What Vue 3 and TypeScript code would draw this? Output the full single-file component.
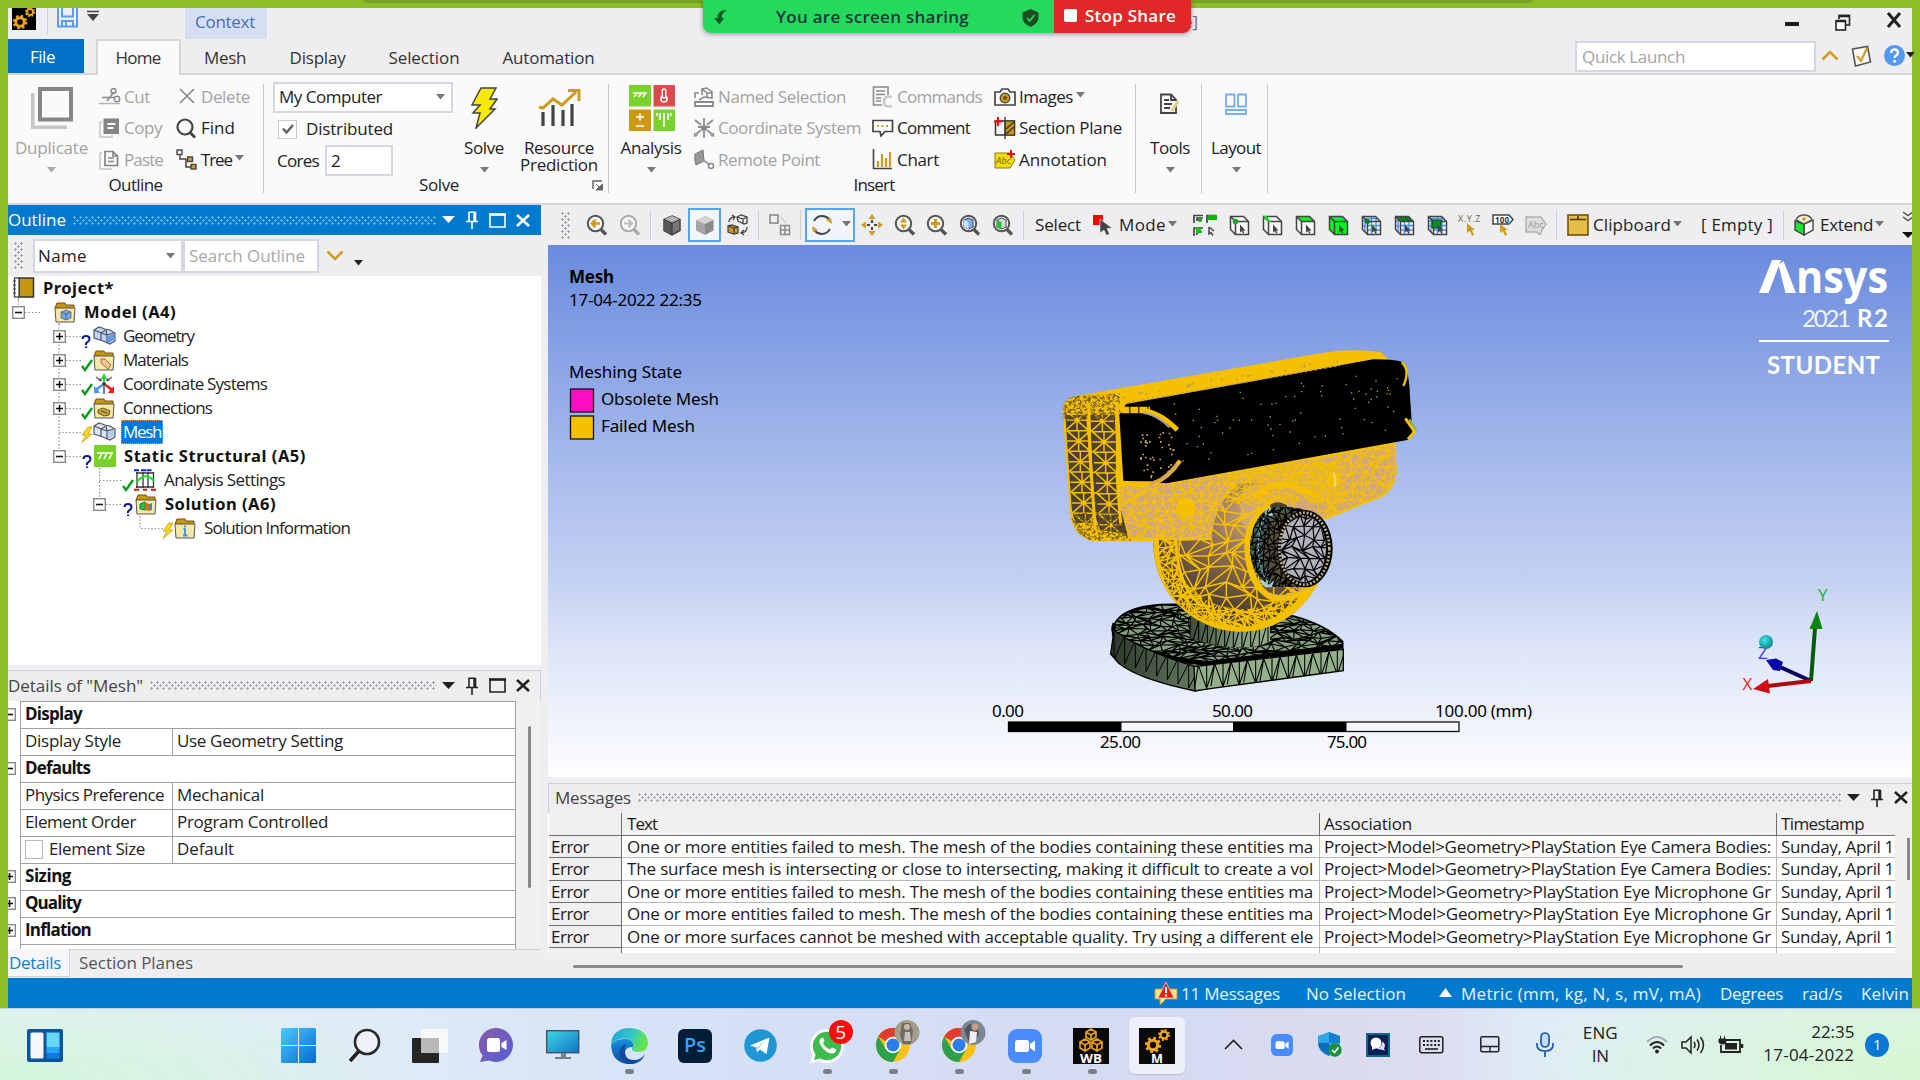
<script setup lang="ts">
import { h } from 'vue'

/* Spreads a label's letters so it takes exactly the given number of pixels. */
const vFit = {
  mounted(el: HTMLElement, binding: { value?: number }) {
    if (!binding.value) return
    const range = document.createRange()
    range.selectNodeContents(el)
    const natural = range.getBoundingClientRect().width
    const count = (el.textContent || '').trim().length
    el.style.letterSpacing = ((binding.value - natural) / count).toFixed(3) + 'px'
  },
}

const cubeBox = '<path d="M1.500 1.500h13l5 5v13h-13l-5-5z" fill="#f6f6f6"/>'
const cubeLines = '<path d="M1.500 1.500h13l5 5v13h-13l-5-5zM1.500 1.500l5 5h13M6.500 6.500v13" fill="none" stroke="#444" stroke-width="1.500"/>'
const cursor = '<path d="M11 9.500v8l2-1.500 1 2.500 1.300-.6-1-2.400h2.200z" fill="#444"/>'
const cubeGrid = '<path d="M1.500 6h4M1.500 11h4M6.500 10.500h13M6.500 15h13M10.500 2v17M15 2v17M4 3v14M3 3.500h14" fill="none" stroke="#4a90ee" stroke-width="1.400"/>'
const lens = (c: string) => `<circle cx="9.500" cy="9.500" r="7.700" fill="#f7f7f7" stroke="${c}" stroke-width="2"/><path d="M15 15.500l5 5" stroke="${c}" stroke-width="3.400"/>`
const folder = '<path d="M1 7l2-5h8l1 2h8v5z" fill="#c8960c" stroke="#6b5312"/><path d="M1 7h20l-1 14H2z" fill="#f4e9ab" stroke="#555"/>'
const gear = (x: number, y: number, s: number) => `<g transform="translate(${x} ${y}) scale(${s})"><circle r="5" fill="none" stroke="#f0a41c" stroke-width="3.400"/><circle r="7.300" fill="none" stroke="#f0a41c" stroke-width="2.600" stroke-dasharray="2.900 2.830"/></g>`
const chrome = '<circle cx="17" cy="17" r="17" fill="#fbc116"/><path d="M17 17L2.300 8.500A17 17 0 0 1 31.700 8.500H17z" fill="#e33b2e"/><path d="M17 17l7.300 4.200L17 34A17 17 0 0 1 2.300 8.500L9.700 21z" fill="#2ea04b"/><path d="M2.300 8.500A17 17 0 0 1 31.700 8.500H17a8.500 8.500 0 0 0-7.400 4.300z" fill="#e33b2e"/><circle cx="17" cy="17" r="8.300" fill="#fff"/><circle cx="17" cy="17" r="6.500" fill="#2b7de9"/>'
const camera = (s: number) => `<g transform="scale(${s})"><rect width="34" height="34" rx="9" fill="#4a8cff"/><rect x="7" y="11" width="14" height="12" rx="2.500" fill="#fff"/><path d="M22 15l5-3.500v11L22 19z" fill="#fff"/></g>`
const miniCube = (f: string) => `<path d="M5 7l5-2 5 2v6l-5 2-5-2z" fill="${f}" stroke="#667" stroke-width=".8"/><path d="M5 7l5 2 5-2M10 9v6" fill="none" stroke="#556" stroke-width=".8"/>`
const blocks = (a: string, b: string) => `<path d="M1 5l5-3 6 2 5 1 5 3v8l-5 3-7-3-9-3z" fill="${a}" stroke="#556" stroke-width="1.200"/><path d="M15 11l6-2v6l-6 3z" fill="${b}"/><path d="M1 5l7 3v8M8 8l5-3M8 8l6 2v8M14 10l7-2M14 10l-1-5" fill="none" stroke="#556" stroke-width="1.200"/>`

const icons: Record<string, [number, number, string]> = {
  app: [24, 22, `<rect width="24" height="22" fill="#000"/>${gear(8, 14, 0.85)}${gear(18, 4, 0.6)}`],
  save: [21, 20, '<path d="M1 0v18.500h19V0M5 0v8.500h11V0M5 18v-5h11v5M9 14v4" fill="none" stroke="#5b9bf0" stroke-width="2"/>'],
  qat: [12, 12, '<path d="M0 1.500h12" stroke="#444" stroke-width="1.500"/><path d="M0 4h12L6 11z" fill="#444"/>'],
  down: [9, 6, '<path d="M0 0h9L4.500 5.500z" fill="#777"/>'],
  downLight: [9, 6, '<path d="M0 0h9L4.500 5.500z" fill="#a9a9a9"/>'],
  downDark: [9, 6, '<path d="M0 0h9L4.500 5.500z" fill="#222"/>'],
  up: [13, 9, '<path d="M0 9h13L6.500 0z" fill="#fff"/>'],
  min: [14, 4, '<rect width="14" height="4" fill="#1a1a1a"/>'],
  restore: [16, 17, '<path d="M4 5V1.500h10.500V11H11" fill="none" stroke="#222" stroke-width="1.600"/><path d="M4 2h11" stroke="#222" stroke-width="2.500"/><rect x="1" y="7" width="9.500" height="9" fill="#fff" stroke="#222" stroke-width="1.600"/><path d="M1 7h9.500" stroke="#222" stroke-width="2.500"/>'],
  close: [16, 16, '<path d="M2 1l12 14M14 1L2 15" stroke="#222" stroke-width="3"/>'],
  chevUp: [18, 12, '<path d="M1.500 10.500L9 3l7.500 7.500" fill="none" stroke="#cfa020" stroke-width="2.600"/>'],
  chevDown: [18, 12, '<path d="M1.500 1.500L9 9l7.500-7.500" fill="none" stroke="#cfa020" stroke-width="2.600"/>'],
  checkSheet: [21, 22, '<path d="M1.500 4L16.500 1.500l3 15.500-15 4z" fill="#fafafa" stroke="#555" stroke-width="1.600"/><path d="M6 11l4 5 6-13" fill="none" stroke="#cfa020" stroke-width="2.200"/>'],
  help: [21, 21, '<circle cx="10.500" cy="10.500" r="10.500" fill="#5298f0"/><path d="M7.200 8q0-3.500 3.400-3.500T14 7.500q0 1.600-1.700 2.700T10.600 13" fill="none" stroke="#fff" stroke-width="2.300"/><circle cx="10.600" cy="16.300" r="1.500" fill="#fff"/>'],
  duplicate: [42, 42, '<path d="M1.500 6v34.500H36" fill="none" stroke="#c6c6c6" stroke-width="4"/><rect x="9" y="2" width="31" height="30.500" fill="#fafafa" stroke="#868686" stroke-width="4"/>'],
  cut: [22, 18, '<path d="M0 15.500h21" stroke="#b5b5b5" stroke-width="1.500"/><path d="M3 9.500h12M8 13l7-9" stroke="#8a8a8a" stroke-width="1.700" fill="none"/><circle cx="14.500" cy="3" r="2.500" fill="none" stroke="#8a8a8a" stroke-width="1.500"/><circle cx="18" cy="11" r="2.700" fill="none" stroke="#8a8a8a" stroke-width="1.500"/>'],
  copy: [22, 20, '<path d="M3 4H1v15h12v-2" fill="none" stroke="#c6c6c6" stroke-width="1.500"/><rect x="4.500" y=".5" width="15.500" height="15.500" fill="#848484"/><path d="M8.500 6h8M8.500 10h6" stroke="#fff" stroke-width="1.800"/>'],
  paste: [22, 20, '<path d="M3 3H1v16h12" fill="none" stroke="#c6c6c6" stroke-width="1.500"/><path d="M6 1.500h8l4.500 4.500v9.500H6zM14 1.500V6h4.500M9 8h6M9 11.500h6" fill="none" stroke="#848484" stroke-width="1.700"/>'],
  delete: [20, 17, '<path d="M3 1l14 14M17 1L3 15" stroke="#8c8c8c" stroke-width="1.700"/>'],
  find: [21, 21, '<circle cx="9" cy="9" r="7.500" fill="none" stroke="#444" stroke-width="2.200"/><path d="M14 14.500l5 5" stroke="#444" stroke-width="2.800"/>'],
  tree: [22, 21, '<path d="M4 5v5h6M10 10v8h6" fill="none" stroke="#444" stroke-width="1.500"/><rect x="1" y="1" width="5" height="4.500" fill="#fff" stroke="#444" stroke-width="1.400"/><rect x="11.500" y="8" width="5" height="4.500" fill="#cfa020" stroke="#444" stroke-width="1.400"/><rect x="15" y="15.500" width="5" height="4.500" fill="#cfa020" stroke="#444" stroke-width="1.400"/>'],
  tick: [12, 10, '<path d="M1 4.500l3.500 4L11 1" fill="none" stroke="#666" stroke-width="2.600"/>'],
  solve: [27, 42, '<path d="M10 1h15l-6 11h7l-7 10h5L5 41l4-15H2l7-8H1z" fill="#f7e908" stroke="#444" stroke-width="1.500"/>'],
  resource: [43, 38, '<path d="M5 37V23M15 37V16M25 37V21M34 37V15" stroke="#444" stroke-width="3.200"/><path d="M1 18l4 1 10-9 9 6L38 3" fill="none" stroke="#cf9b1c" stroke-width="3"/><path d="M30 1.500h11V12" fill="none" stroke="#cf9b1c" stroke-width="3"/>'],
  launcher: [12, 11, '<path d="M1 9V1h9" fill="none" stroke="#666" stroke-width="1.500"/><path d="M4 4l5 5M10.500 4v6H4z" fill="#666" stroke="#666"/>'],
  analysis: [46, 46, '<rect width="22" height="21.500" fill="#79d22b"/><rect x="24.500" width="21.500" height="21.500" fill="#df4a4e"/><rect y="24.500" width="22" height="21.500" fill="#cb9811"/><rect x="24.500" y="24.500" width="21.500" height="21.500" fill="#79d22b"/><path d="M4 8h14M8 8l-3 4M12.500 8l-3 4M17 8l-3 4" stroke="#fff" stroke-width="1.600"/><circle cx="35" cy="14" r="3" fill="none" stroke="#fff" stroke-width="1.600"/><rect x="33.300" y="4" width="3.500" height="9" rx="1.700" fill="#df4a4e" stroke="#fff" stroke-width="1.400"/><path d="M7 32h8M11 28.500v7M7 41h8M35 28v14M31 28v7M39 28v7M28 28v3M42 28v3" stroke="#fff" stroke-width="1.700"/>'],
  named: [22, 22, '<path d="M2 16h18v4H2z" fill="#fff" stroke="#8a8a8a" stroke-width="1.800"/><path d="M6 14l5-3 8 1v-6l-5-4-5 1v6M9 3l5 4v6M14 7h5M2 12V7h4" fill="none" stroke="#8a8a8a" stroke-width="1.600"/>'],
  coord: [22, 22, '<path d="M11 1v7M2 3l6 5M20 3l-6 5M1 19l7-6M21 19l-7-6M11 14v7M5 10h12" stroke="#909090" stroke-width="1.800"/><path d="M1 20v-5l4 4zM21 20v-5l-4 4z" fill="#999"/><circle cx="11" cy="11" r="3" fill="#888"/>'],
  remote: [22, 21, '<path d="M2 5l8-4 1 11-8 4q-2-6-1-11z" fill="#999" stroke="#777"/><path d="M9 10l8 6" stroke="#999" stroke-width="1.600"/><circle cx="18" cy="17" r="2.500" fill="#fff" stroke="#888" stroke-width="1.500"/>'],
  commands: [22, 22, '<path d="M16 9V1H1.500v18H10M4 5h9M4 8.500h9M4 12h5M4 15h5" fill="none" stroke="#8a8a8a" stroke-width="1.600"/><path d="M20 11q-8-2-8 4.500t8 4.500" fill="none" stroke="#c9c9c9" stroke-width="2.600"/>'],
  comment: [22, 18, '<path d="M1 1.500h19.500v11H13L9 17l-1-4.500H1z" fill="#fff" stroke="#444" stroke-width="1.700"/><path d="M5 7h2M9.500 7h2M14 7h2" stroke="#cfa020" stroke-width="2"/>'],
  chart: [22, 21, '<path d="M1.500 0v19.500H20" fill="none" stroke="#444" stroke-width="1.600"/><path d="M6 18v-6M10 18V5M14 18V9M18 18V3" stroke="#cf9b1c" stroke-width="2.200"/>'],
  images: [22, 18, '<path d="M1 4h5l2-3h6l2 3h5v13H1z" fill="#f8f8f8" stroke="#444" stroke-width="1.700"/><circle cx="11" cy="10" r="4.800" fill="#cf9b1c" stroke="#444" stroke-width="1.300"/><circle cx="11" cy="10" r="2" fill="#6b4d06"/>'],
  section: [22, 22, '<rect x="1.500" y="4" width="19" height="14" fill="#f4f4f4" stroke="#333" stroke-width="1.500"/><rect x="11" y="4" width="9.500" height="14" fill="#c8960c" stroke="#333"/><path d="M12 12l8-7M12 17l8-7M11 0v22" stroke="#333" stroke-width="1.300"/><path d="M4 0v9M0 4.500h8" stroke="#f00" stroke-width="2"/>'],
  annotation: [22, 20, '<path d="M1 3h15l5 7-5 8H1z" fill="#f5dd0c" stroke="#8a7b10"/><text x="2" y="14" font-size="9.500" font-family="Open Sans" fill="#776a10">Abc</text><path d="M17 0v8M13 4h8" stroke="#f00" stroke-width="2"/>'],
  tools: [22, 22, '<path d="M17 11v9H2V1.500h10l5 5V8M12 1.500V7h5M5 7h5M5 11h8M5 15h6" fill="none" stroke="#444" stroke-width="1.800"/><path d="M19 8l-6 10" stroke="#e6c88a" stroke-width="3"/>'],
  layout: [22, 22, '<path d="M1 1.500h8.500v12H1zM13 1.500h8v12h-8zM1 17h20v4H1z" fill="none" stroke="#7aacf0" stroke-width="1.800"/>'],
  zback: [22, 22, lens('#555') + '<path d="M14 9.500H7M9.500 6L6 9.500 9.500 13" stroke="#cf9b1c" stroke-width="2.600" fill="none"/>'],
  zfwd: [22, 22, lens('#aaa') + '<path d="M5 9.500h7M9.500 6l3.500 3.500L9.500 13" stroke="#bbb" stroke-width="2" fill="none"/>'],
  cubeDark: [20, 21, '<path d="M10 1l8 3.500v11L10 20l-8-4.500v-11z" fill="#777" stroke="#444" stroke-width="1.500"/><path d="M10 1l8 3.500-8 3.500-8-3.500z" fill="#b5b5b5"/><path d="M10 8v12l-8-4.500v-11z" fill="#585858"/><path d="M2 4.500L10 8l8-3.500M10 8v12" fill="none" stroke="#333"/>'],
  cubeSoft: [20, 21, '<path d="M10 1l8.500 4v10.500L10 20z" fill="#8a8a8a"/><path d="M10 1l8.500 4L10 9 1 5z" fill="#d3d3d3"/><path d="M10 9v11L1 15.500V5z" fill="#a5a5a5"/>'],
  cubes: [22, 22, '<path d="M10 3l4-2 6 2v6l-3 1-6-3zM10 3l6 2 4-2M16 5v5" fill="#eee" stroke="#444" stroke-width="1.300"/><path d="M1 12l4-1 6 2v6l-4 1-6-2z" fill="#cf9b1c" stroke="#444" stroke-width="1.300"/><path d="M1 12l6 2 4-1M7 14v6" fill="none" stroke="#444" stroke-width="1.300"/><path d="M2 8q0-4 5-5M5 1l3 2-2 3M20 13q0 5-5 6M17 16l-3 3 3 2" fill="none" stroke="#444" stroke-width="1.300"/>'],
  boxes: [22, 22, '<rect x="1" y="1" width="8" height="8" fill="none" stroke="#8a8a8a" stroke-width="1.600"/><path d="M11.500 11.500h9v9h-9zM16 11.500v9M11.500 16h9" fill="none" stroke="#8a8a8a" stroke-width="1.500"/><path d="M12 3l5 6" stroke="#ccc" stroke-width="1.400"/>'],
  orbit: [22, 22, '<path d="M3 7q3-5 8-5 4 0 7 3M19 15q-3 5-8 5-4 0-7-3" fill="none" stroke="#444" stroke-width="1.800"/><path d="M15 6l5-2 1 6zM7 16l-5 2-1-6z" fill="#cf9b1c"/>'],
  pan: [22, 22, '<path d="M11 0l3.500 5h-7zM11 22l3.500-5h-7zM0 11l5-3.500v7zM22 11l-5-3.500v7z" fill="#cf9b1c"/><path d="M11 6v3M11 13v3M6 11h3M13 11h3" stroke="#444" stroke-width="2"/>'],
  zud: [22, 22, lens('#555') + '<path d="M9.500 3.500l3.500 5H6zM9.500 15.500L6 10.500h7z" fill="#cf9b1c"/>'],
  zplus: [22, 22, lens('#555') + '<path d="M9.500 5v9M5 9.500h9" stroke="#cf9b1c" stroke-width="3"/>'],
  zblue: [22, 22, lens('#555') + '<path d="M9.500 4l4.500 2v7l-4.500 2L5 13V6z" fill="#7badf0" stroke="#445"/><path d="M9.500 8v7L5 13V6z" fill="#cfe0f8"/>'],
  zgreen: [22, 22, lens('#555') + '<path d="M9.500 4l4.500 2v7l-4.500 2L5 13V6z" fill="#ddd" stroke="#444"/><path d="M9.500 8v7L5 13V6z" fill="#19c52c"/>'],
  redcur: [22, 22, '<rect y="1" width="10" height="10" fill="#f00"/><path d="M7 5v14l4-3 2.500 5.500 3-1.500-2.500-5.500 5-.5z" fill="#444" stroke="#eee" stroke-width=".6"/>'],
  filters: [24, 23, '<path d="M1 9V1.500h9M4 7V4h6M14 9V1.500h9M1 22v-8h9M4 21v-3h5" fill="none" stroke="#444" stroke-width="1.700"/><rect x="15" y="1" width="9" height="5" fill="#0b0"/><circle cx="7" cy="6" r="2" fill="#0a0"/><rect x="3" y="14" width="5" height="5" fill="#0c0"/><path d="M16 13v7l2-1.500 2 3M16 13l5 4" stroke="#444" stroke-width="1.500" fill="none"/>'],
  c1: [21, 21, cubeBox + cubeLines + '<circle cx="6.500" cy="6.500" r="2.800" fill="#1aa52a"/>' + cursor],
  c2: [21, 21, cubeBox + cubeLines + '<path d="M1 1h4l4 6H6z" fill="#1ad52a"/>' + cursor],
  c3: [21, 21, cubeBox + '<path d="M1.500 1.500h13l5 5h-13z" fill="#0bf51c"/>' + cubeLines + cursor],
  c4: [21, 21, '<path d="M1.500 1.500h13l5 5v13h-13l-5-5z" fill="#0bf51c"/>' + cubeLines + cursor],
  c5: [21, 21, cubeBox + cubeGrid + cubeLines + '<circle cx="6.500" cy="6.500" r="2.500" fill="#0a7a1a"/>' + cursor],
  c6: [21, 21, cubeBox + cubeGrid + '<path d="M1.500 1.500h13l5 5h-13z" fill="#118a20"/><path d="M6 2l4 4M11 2l4 4" stroke="#042"/>' + cubeLines + cursor],
  c7: [21, 21, cubeBox + cubeGrid + cubeLines + '<path d="M5 5h9v8H5z" fill="#118a20" stroke="#042"/>' + cursor],
  xyz: [23, 22, '<text x="0" y="8" font-size="9" letter-spacing=".6" font-family="Open Sans" fill="#666">X.Y.Z</text><path d="M9 9v10l3-2 2 5 2-1-2-5h3z" fill="#cf9b1c"/>'],
  hundred: [22, 22, '<path d="M1 1h16l4 4.500-4 4.500H1z" fill="#fff" stroke="#444" stroke-width="1.500"/><text x="3" y="8.700" font-size="8" font-weight="700" textLength="14" font-family="Open Sans" fill="#333">100</text><path d="M8 10v9l3-2 2 5 2-1-2-5h3z" fill="#cf9b1c"/>'],
  abc: [22, 20, '<path d="M1 2h15l5 7-5 8-1 3-3-3H1z" fill="#ddd" stroke="#b0b0b0" stroke-width="1.400"/><text x="3" y="13" font-size="9" font-family="Open Sans" fill="#999">Abc</text>'],
  clip: [22, 22, '<rect x="1" y="1" width="20" height="20" fill="#e6bd45" stroke="#6b5312" stroke-width="1.600"/><path d="M3 5.500h16M11 2v3" stroke="#4b3a0c" stroke-width="1.600"/>'],
  extend: [22, 22, '<path d="M11 10l9-4v10l-9 5z" fill="#fff" stroke="#444" stroke-width="1.400"/><path d="M11 10L2 7v9l9 5z" fill="#1be52c" stroke="#444" stroke-width="1.400"/><path d="M3 6q2-5 8-5t8 5l-8 4z" fill="#f3ecd8" stroke="#555" stroke-width="1.400"/><path d="M11 3v4M9 5h4" stroke="#cf9b1c" stroke-width="1.500"/>'],
  overflow: [10, 28, '<path d="M1 1l5 3.500L11 1M1 6l5 3.500L11 6" fill="none" stroke="#555" stroke-width="1.500"/><path d="M0 21h12l-6 6z" fill="#111"/>'],
  pDown: [13, 8, '<path d="M0 0h13L6.500 7z" fill="currentColor"/>'],
  pPin: [12, 18, '<path d="M3 1v9M9.500 1v9M2.500 1.200h7M0 10.500h12M6 11v7" fill="none" stroke="currentColor" stroke-width="1.600"/><path d="M8.500 1v9" stroke="currentColor" stroke-width="2.400"/>'],
  pMax: [17, 15, '<path d="M1 1.500h15V14H1z" fill="none" stroke="currentColor" stroke-width="1.600"/><path d="M0 1.500h17" stroke="currentColor" stroke-width="2.500"/>'],
  pX: [14, 13, '<path d="M1 1l12 11M13 1L1 12" stroke="currentColor" stroke-width="2.500"/>'],
  minus: [13, 13, '<rect x=".7" y=".7" width="11.600" height="11.600" fill="#fff" stroke="#8a8a8a" stroke-width="1.400"/><path d="M3 6.500h7" stroke="#111" stroke-width="1.600"/>'],
  plus: [13, 13, '<rect x=".7" y=".7" width="11.600" height="11.600" fill="#fff" stroke="#8a8a8a" stroke-width="1.400"/><path d="M3 6.500h7M6.500 3v7" stroke="#111" stroke-width="1.600"/>'],
  sq: [10, 14, '<path d="M1.500 4q0-3 3.500-3t3.500 3q0 2-2 3.200T5 10" fill="none" stroke="#0b1d8c" stroke-width="2"/><rect x="4" y="11.500" width="2.200" height="2.200" fill="#0b1d8c"/>'],
  sok: [12, 12, '<path d="M1 7l3 4L11 1" fill="none" stroke="#0d9a16" stroke-width="2.400"/>'],
  sbolt: [12, 16, '<path d="M7 0L1 8h4l-4 7.500L11 7H7l4-7z" fill="#fbd91a" stroke="#c59a10" stroke-width=".8"/>'],
  project: [21, 21, '<rect x="6" y="1" width="14.500" height="19" fill="#c8960c" stroke="#333" stroke-width="1.500"/><rect x="1.500" y="1" width="4.500" height="19" fill="#fff" stroke="#444" stroke-width="1.300"/><path d="M0 4h3M0 8h3M0 12h3M0 16h3" stroke="#444"/>'],
  model: [22, 22, folder + '<g transform="translate(2 4)">' + miniCube('#6ea8ee') + '</g>'],
  geometry: [22, 20, blocks('#bcd4f4', '#5f9be8')],
  mesh: [22, 20, blocks('#dbe6f5', '#b4cbea')],
  materials: [22, 22, folder + '<path d="M8 10h4l6 6-3 4-7-6z" fill="#f6c79a" stroke="#a06a3a"/>'],
  csys: [22, 22, '<path d="M3 4l5 4M19 4l-5 4" stroke="#666" stroke-width="1.600"/><path d="M9 8l-4 0 3-3zM13 8l4 0-3-3z" fill="#555"/><path d="M11 21v-8" stroke="#777" stroke-width="2"/><path d="M11 0l3 6h-2v5h-2V6H8z" fill="#1ad52a"/><path d="M1 20v-7l2 2 6-4 1 2-5 4 2 3z" fill="#4a96ee"/><path d="M21 20v-7l-2 2-6-4-1 2 5 4-2 3z" fill="#f01818"/><circle cx="11" cy="11" r="2" fill="#444"/>'],
  conn: [22, 22, folder + '<path d="M5 13l5-2 7 3-1 4-5 1-6-3z" fill="#c8a23a" stroke="#6b5312"/><path d="M8 14l6 2" stroke="#444"/>'],
  structural: [22, 22, '<rect width="22" height="22" fill="#79d22b"/><path d="M3 8h16M8 8l-3 6M13 8l-3 6M18 8l-3 6" stroke="#fff" stroke-width="1.600"/>'],
  settings: [22, 22, '<path d="M3 3v16M9 3v16M14 3v16M19.500 3v16M2 4h18M2 18h18" stroke="#333" stroke-width="1.300"/><path d="M3 13Q11 2 20 12" fill="none" stroke="#12e02a" stroke-width="2"/><path d="M0 1.200h5M7 1.200h5M12.500 1.200h5" stroke="#0a22e8" stroke-width="2"/><path d="M0 20.800h5M9 20.800h4M17 20.800h5" stroke="#e81010" stroke-width="2"/>'],
  solution: [22, 22, folder + '<path d="M5 11l5-2v8l-5-1z" fill="#1ec83a" stroke="#274"/><path d="M10 9l4 2v7l-4-1z" fill="#e8641e"/><path d="M14 11l3-1v7l-3 1z" fill="#2b8ce8"/>'],
  info: [22, 22, folder + '<path d="M11 12v6M9 18.500h4.500M9.500 12h2M11 8.500v2" stroke="#3f8ee8" stroke-width="1.800"/>'],
  warn: [24, 24, '<path d="M1 7h22v10H12l-6 6v-6H1z" fill="#ffe28a" stroke="#c29a30"/><path d="M12 0l8 16H4z" fill="#e02010" stroke="#f7c9c0" stroke-width=".8"/><path d="M12 5v6" stroke="#fff" stroke-width="2"/><circle cx="12" cy="13.500" r="1.200" fill="#fff"/>'],
  phone: [14, 16, '<path d="M13 1Q3 1 3.500 9H0l5.500 6.500L10 9H8Q7 4 13 1z" fill="#0c5a22"/>'],
  shield: [17, 18, '<path d="M8.500 0l8 3.500v5q0 6-8 9.500-8-3.500-8-9.500v-5z" fill="#1b4f22"/><path d="M5 9l2.700 3L12.500 6" fill="none" stroke="#25da5e" stroke-width="1.700"/>'],
  widgets: [36, 33, '<rect width="36" height="33" rx="2" fill="#0a559f"/><rect x="3.500" y="3.500" width="13" height="26" rx="1.500" fill="#f4f8fc"/><rect x="19.500" y="3.500" width="13" height="15" fill="#69d6fb"/><rect x="19.500" y="18" width="13" height="6" fill="#27a3f3"/><rect x="19.500" y="24" width="13" height="5.500" fill="#0a7ce0"/>'],
  start: [35, 35, '<defs><linearGradient id="wg" x1="0" y1="0" x2="1" y2="1"><stop offset="0" stop-color="#4ccaff"/><stop offset="1" stop-color="#0669d2"/></linearGradient></defs><path d="M0 1.500Q0 0 1.500 0H17v17H0zM18 0h15.500Q35 0 35 1.500V17H18zM0 18h17v17H1.500Q0 35 0 33.500zM18 18h17v15.500q0 1.500-1.500 1.500H18z" fill="url(#wg)"/>'],
  search: [34, 35, '<circle cx="20" cy="14" r="12" fill="#eef2f8" stroke="#2a2a2a" stroke-width="2.600"/><path d="M12 23L3 33" stroke="#222" stroke-width="3.600"/>'],
  taskview: [36, 34, '<rect y="9" width="27" height="25" rx="1" fill="#262626"/><rect x="9" width="27" height="24" rx="1" fill="#fafafa" fill-opacity=".95"/><path d="M9 9h18v15H9z" fill="#b9b9b9"/>'],
  chat: [35, 35, '<defs><linearGradient id="cg" x1="0" y1="0" x2="1" y2="1"><stop offset="0" stop-color="#8a5aa8"/><stop offset="1" stop-color="#5560d8"/></linearGradient></defs><path d="M17.500 0A17 17 0 1 1 10 32.500L1 34l2.500-6.500A17 17 0 0 1 17.500 0z" fill="url(#cg)"/><rect x="8" y="10" width="13" height="14" rx="2.500" fill="#fff"/><path d="M22.500 15l5-3v10l-5-3z" fill="#fff"/>'],
  monitor: [34, 30, '<defs><linearGradient id="mg" x1="0" y1="0" x2="1" y2="1"><stop offset="0" stop-color="#3fd8e4"/><stop offset="1" stop-color="#1372c4"/></linearGradient></defs><rect x=".7" y=".7" width="32" height="22" fill="url(#mg)" stroke="#3a5568" stroke-width="1.400"/><path d="M15 23h5v4h-5zM9 27h16v2H9z" fill="#777f88"/>'],
  edge: [37, 36, '<defs><linearGradient id="e1" x1="0" y1="0" x2="1" y2=".3"><stop offset="0" stop-color="#1fa0e0"/><stop offset=".6" stop-color="#35c9c0"/><stop offset="1" stop-color="#66e64c"/></linearGradient><linearGradient id="e2" x1="0" y1="0" x2="0" y2="1"><stop offset="0" stop-color="#1890dc"/><stop offset="1" stop-color="#0d4ba8"/></linearGradient></defs><path d="M0 17Q1 0 19 0q17 1 18 15 0 9-10 9-7 0-6-4 3-6-4-9Q6 9 0 17z" fill="url(#e1)"/><path d="M0 17q5-7 15-6 8 1 7 8-9 0-8 7 2 8 12 8-5 3-10 2Q1 34 0 17z" fill="url(#e2)"/><path d="M14 24q0 8 9 8 7 0 11-6-3 9-13 10Q8 35 8 24q1-6 7-8-2 4-1 8z" fill="#114b9e"/>'],
  ps: [34, 34, '<rect width="34" height="34" rx="6" fill="#001e36"/><text x="6" y="22.500" font-size="19" font-weight="600" textLength="22" lengthAdjust="spacingAndGlyphs" font-family="Open Sans" fill="#31a8ff">Ps</text>'],
  telegram: [33, 33, '<circle cx="16.500" cy="16.500" r="16.300" fill="#1e96d4"/><path d="M6 16.500L25.500 8.500 22.500 25l-6.500-4.500-3 3-1-5z" fill="#fff"/><path d="M12.500 18.500l9-7-7 8-.8 3.500z" fill="#b7d9ec"/>'],
  whatsapp: [36, 36, '<path d="M18 1A17 17 0 1 1 10 33L1 35.500 3.500 26.500A17 17 0 0 1 18 1z" fill="#fff"/><circle cx="18" cy="18" r="14.200" fill="#3dbb4c"/><path d="M5 32l2.500-8L13 30z" fill="#3dbb4c"/><path d="M12 10q-4 4 2 10.500T25.500 25q3-3 1-4l-3.500-1.500-2 2q-5-2-7-6.500l1.500-2-1.500-3.500z" fill="#fff"/>'],
  chromeA: [44, 43, `<g transform="translate(0 8)">${chrome}</g><circle cx="31" cy="12.500" r="12.500" fill="#a39d8b"/><path d="M26 3h8l3 8-2 13h-8l-3-9z" fill="#6f6a68"/><circle cx="31" cy="7" r="3" fill="#cdb9a4"/><path d="M29 12h5l1 9h-7z" fill="#c6c2b8"/>`],
  chromeB: [44, 43, `<g transform="translate(0 8)">${chrome}</g><circle cx="31" cy="12.500" r="12.500" fill="#7e8792"/><path d="M22 10l5-6 9 2 1 9-9 9z" fill="#4f5660"/><circle cx="33" cy="7" r="3.500" fill="#c89d80"/><path d="M28 11l7 1-1 10-7 2z" fill="#eef0f4"/>`],
  zoom: [34, 34, camera(1)],
  wb: [36, 36, '<rect width="36" height="36" fill="#0a0a0a"/><g fill="none" stroke="#e79d1e" stroke-width="1.700"><path d="M18 1l5 3v5l-5 3-5-3V4zM13 4l5 3 5-3M18 7v5M12 11l5 3v6l-5 3-5-3v-6zM7 14l5 3 5-3M12 17v6M24 11l5 3v6l-5 3-5-3v-6zM19 14l5 3 5-3M24 17v6"/></g><text x="7" y="35" font-size="13" font-weight="700" textLength="22" lengthAdjust="spacingAndGlyphs" font-family="Open Sans" fill="#fff">WB</text>'],
  mech: [36, 36, `<rect width="36" height="36" fill="#0a0a0a"/>${gear(14, 17, 0.95)}${gear(25, 7, 0.7)}<text x="12" y="35" font-size="13" font-weight="700" textLength="12" lengthAdjust="spacingAndGlyphs" font-family="Open Sans" fill="#fff">M</text>`],
  tUp: [19, 11, '<path d="M1 10l8.500-8.500L18 10" fill="none" stroke="#222" stroke-width="1.600"/>'],
  tZoom: [22, 22, camera(0.65)],
  tShield: [24, 25, '<path d="M11 0l11 4v7q0 9-11 13Q0 20 0 11V4z" fill="#2aa7e6"/><path d="M11 0l11 4v7H11z" fill="#1580cf"/><path d="M0 11h11v13Q1 19 0 11z" fill="#0f6cbd"/><circle cx="17" cy="18" r="6.700" fill="#1a8f3c"/><path d="M14 18l2.500 2.500 4-5" fill="none" stroke="#fff" stroke-width="1.600"/>'],
  tChat: [24, 24, '<rect width="24" height="24" fill="#0d6a80"/><rect x="2" y="2" width="20" height="20" fill="#0a1d56"/><circle cx="10" cy="10" r="5.500" fill="#fff"/><path d="M6 13v4l4-2z" fill="#fff"/><path d="M16.500 8.500q4 3 1.500 7l1 2-4-1q-3 0-4-1 5-1 5.500-7z" fill="#dbe4f4"/>'],
  tKey: [25, 18, '<rect x=".8" y=".8" width="23" height="16" rx="2" fill="none" stroke="#222" stroke-width="1.500"/><path d="M4 5h17M4 9h17" stroke="#222" stroke-width="2" stroke-dasharray="2 1.700"/><path d="M6 13h13" stroke="#222" stroke-width="1.600"/>'],
  tPad: [20, 17, '<rect x=".8" y=".8" width="18" height="15" rx="1.500" fill="none" stroke="#222" stroke-width="1.500"/><path d="M1 10.500h18M10 10.500V16" stroke="#222" stroke-width="1.400"/>'],
  tMic: [18, 25, '<rect x="5" y="1" width="8" height="14" rx="4" fill="#c8dcf4" stroke="#1b58b0" stroke-width="1.700"/><path d="M1 11v2q0 6 8 6t8-6v-2M9 19v6" fill="none" stroke="#1b58b0" stroke-width="1.700"/>'],
  tWifi: [22, 19, '<path d="M1 7Q11-3 21 7" fill="none" stroke="#aab" stroke-width="1.800"/><path d="M4 10.500q7-7 14 0M7 13.500q4-4 8 0" fill="none" stroke="#222" stroke-width="1.800"/><circle cx="11" cy="16.500" r="1.900" fill="#222"/>'],
  tVol: [24, 20, '<path d="M1 7h4l5-5v16l-5-5H1z" fill="none" stroke="#222" stroke-width="1.500"/><path d="M13 7q2 3 0 6M16 4.500q4 5.500 0 11M19.500 2q6 8 0 16" fill="none" stroke="#222" stroke-width="1.500"/>'],
  tBat: [26, 18, '<path d="M8 4h14v12H3V9" fill="none" stroke="#222" stroke-width="1.800"/><rect x="7" y="7" width="12" height="6.500" fill="#222"/><path d="M24 8v4" stroke="#222" stroke-width="2.500"/><path d="M1 3h7v3q0 2-3.500 2T1 6zM2.500 0v3M6.500 0v3" fill="#222" stroke="#222"/>'],
}

const Ico = (p: { n: string }) => {
  const [w, ht, body] = icons[p.n]
  return h('svg', { width: w, height: ht, viewBox: `0 0 ${w} ${ht}`, innerHTML: body, class: 'ico' })
}
Ico.props = ['n']

type Label = { t: string; w: number }
const tabs: (Label & { on?: boolean; box: number })[] = [
  { t: 'Home', w: 45, on: true, box: 85 },
  { t: 'Mesh', w: 42, box: 88 },
  { t: 'Display', w: 56, box: 97 },
  { t: 'Selection', w: 71, box: 116 },
  { t: 'Automation', w: 92, box: 133 },
]

type Cmd = Label & { n: string; off?: boolean; arrow?: boolean }
const clipCmds: Cmd[] = [{ n: 'cut', t: 'Cut', w: 26, off: true }, { n: 'copy', t: 'Copy', w: 38, off: true }, { n: 'paste', t: 'Paste', w: 39, off: true }]
const editCmds: Cmd[] = [{ n: 'delete', t: 'Delete', w: 49, off: true }, { n: 'find', t: 'Find', w: 34 }, { n: 'tree', t: 'Tree', w: 31, arrow: true }]
const insertCols: { cls: string; items: Cmd[] }[] = [
  { cls: 'c179', items: [{ n: 'named', t: 'Named Selection', w: 128, off: true }, { n: 'coord', t: 'Coordinate System', w: 143, off: true }, { n: 'remote', t: 'Remote Point', w: 102, off: true }] },
  { cls: 'c122', items: [{ n: 'commands', t: 'Commands', w: 85, off: true }, { n: 'comment', t: 'Comment', w: 73 }, { n: 'chart', t: 'Chart', w: 42 }] },
  { cls: 'c140', items: [{ n: 'images', t: 'Images', w: 54, arrow: true }, { n: 'section', t: 'Section Plane', w: 103 }, { n: 'annotation', t: 'Annotation', w: 88 }] },
]

/* Graphics toolbar: each entry fills the room up to where the next one begins. */
type Tool = { x: number; n?: string; t?: string; w?: number; sep?: boolean; on?: boolean; arrow?: boolean }
const toolSpecs: Tool[] = [
  { x: 586, n: 'zback' }, { x: 619, n: 'zfwd' }, { x: 650, sep: true }, { x: 662, n: 'cubeDark' }, { x: 688, n: 'cubeSoft', on: true },
  { x: 727, n: 'cubes' }, { x: 758, sep: true }, { x: 769, n: 'boxes' }, { x: 800, sep: true }, { x: 805, n: 'orbit', on: true, arrow: true },
  { x: 861, n: 'pan' }, { x: 894, n: 'zud' }, { x: 926, n: 'zplus' }, { x: 959, n: 'zblue' }, { x: 992, n: 'zgreen' }, { x: 1023, sep: true },
  { x: 1035, t: 'Select', w: 46 }, { x: 1093, n: 'redcur' }, { x: 1119, t: 'Mode', w: 47, arrow: true }, { x: 1193, n: 'filters' },
  { x: 1229, n: 'c1' }, { x: 1262, n: 'c2' }, { x: 1295, n: 'c3' }, { x: 1328, n: 'c4' }, { x: 1361, n: 'c5' }, { x: 1394, n: 'c6' }, { x: 1427, n: 'c7' },
  { x: 1458, n: 'xyz' }, { x: 1492, n: 'hundred' }, { x: 1525, n: 'abc' }, { x: 1556, sep: true }, { x: 1567, n: 'clip' },
  { x: 1593, t: 'Clipboard', w: 78, arrow: true }, { x: 1701, t: '[ Empty ]', w: 72 }, { x: 1783, sep: true }, { x: 1793, n: 'extend' },
  { x: 1820, t: 'Extend', w: 53, arrow: true }, { x: 1902, n: 'overflow' },
]
const tools = toolSpecs.map((t, i) => ({ ...t, room: (toolSpecs[i + 1]?.x ?? 1912) - t.x }))

type Node = { t: string; w: number; bold?: boolean; on?: boolean; ind: number; icon: string; st?: string; ex?: string; exAt?: number; lines: string }
const nodes: Node[] = [
  { t: 'Project*', w: 71, bold: true, ind: 35, icon: 'project', lines: 'M10.5 22v2' },
  { t: 'Model (A4)', w: 92, bold: true, ind: 76, icon: 'model', ex: 'minus', exAt: 4, lines: 'M10.5 0v6M17 12.5h17M51 23v1' },
  { t: 'Geometry', w: 71, ind: 115, icon: 'geometry', st: 'sq', ex: 'plus', exAt: 45, lines: 'M51 0v24M58 12.5h16' },
  { t: 'Materials', w: 65, ind: 115, icon: 'materials', st: 'sok', ex: 'plus', exAt: 45, lines: 'M51 0v24M58 12.5h16' },
  { t: 'Coordinate Systems', w: 144, ind: 115, icon: 'csys', st: 'sok', ex: 'plus', exAt: 45, lines: 'M51 0v24M58 12.5h16' },
  { t: 'Connections', w: 89, ind: 115, icon: 'conn', st: 'sok', ex: 'plus', exAt: 45, lines: 'M51 0v24M58 12.5h16' },
  { t: 'Mesh', w: 38, on: true, ind: 115, icon: 'mesh', st: 'sbolt', lines: 'M51 0v24M51 12.5h23' },
  { t: 'Static Structural (A5)', w: 182, bold: true, ind: 116, icon: 'structural', st: 'sq', ex: 'minus', exAt: 45, lines: 'M51 0v12M58 12.5h16' },
  { t: 'Analysis Settings', w: 121, ind: 156, icon: 'settings', st: 'sok', lines: 'M91.500 0v24M91.500 12.500h23' },
  { t: 'Solution (A6)', w: 111, bold: true, ind: 157, icon: 'solution', st: 'sq', ex: 'minus', exAt: 85, lines: 'M91.500 0v12M98 12.500h16' },
  { t: 'Solution Information', w: 146, ind: 196, icon: 'info', st: 'sbolt', lines: 'M132 0v12.500h23' },
]

type Prop = { k: string; kw: number; v?: string; vw?: number; ex?: string; box?: boolean }
const props: Prop[] = [
  { k: 'Display', kw: 57, ex: 'minus' },
  { k: 'Display Style', kw: 96, v: 'Use Geometry Setting', vw: 166 },
  { k: 'Defaults', kw: 65, ex: 'minus' },
  { k: 'Physics Preference', kw: 139, v: 'Mechanical', vw: 87 },
  { k: 'Element Order', kw: 111, v: 'Program Controlled', vw: 151 },
  { k: 'Element Size', kw: 96, v: 'Default', vw: 57, box: true },
  { k: 'Sizing', kw: 46, ex: 'plus' },
  { k: 'Quality', kw: 56, ex: 'plus' },
  { k: 'Inflation', kw: 66, ex: 'plus' },
]

const one = 'One or more entities failed to mesh. The mesh of the bodies containing these entities ma'
const cam = 'Project>Model>Geometry>PlayStation Eye Camera Bodies:'
const mic = 'Project>Model>Geometry>PlayStation Eye Microphone Gr'
const messages = [
  { a: one, b: cam },
  { a: 'The surface mesh is intersecting or close to intersecting, making it difficult to create a vol', b: cam },
  { a: one, b: mic },
  { a: one, b: mic },
  { a: 'One or more surfaces cannot be meshed with acceptable quality. Try using a different ele', b: mic },
]

const pinned: { n: string; run?: boolean; on?: boolean; badge?: string }[] = [
  { n: 'start' }, { n: 'search' }, { n: 'taskview' }, { n: 'chat' }, { n: 'monitor' }, { n: 'edge', run: true }, { n: 'ps' }, { n: 'telegram' },
  { n: 'whatsapp', run: true, badge: '5' }, { n: 'chromeA', run: true }, { n: 'chromeB', run: true }, { n: 'zoom', run: true }, { n: 'wb', run: true }, { n: 'mech', on: true },
]
const tray = [['tUp', 50], ['tZoom', 48], ['tShield', 48], ['tChat', 47], ['tKey', 60], ['tPad', 58], ['tMic', 52]] as [string, number][]

/* ---- mesh drawing ---- */
function rng(seed: number) {
  let s = seed
  return () => {
    s = (s * 16807) % 2147483647
    return s / 2147483647
  }
}
function lattice(x0: number, y0: number, x1: number, y1: number, sx: number, sy: number, seed: number, j = 0.35) {
  const r = rng(seed)
  const cols = Math.ceil((x1 - x0) / sx)
  const rows = Math.ceil((y1 - y0) / sy)
  const p: [number, number][][] = []
  for (let i = 0; i <= rows; i++) {
    p.push([])
    for (let k = 0; k <= cols; k++) {
      p[i].push([Math.round(x0 + (k + (i % 2) * 0.5 + (r() - 0.5) * j * 2) * sx), Math.round(y0 + (i + (r() - 0.5) * j * 2) * sy)])
    }
  }
  let d = ''
  for (let i = 0; i < rows; i++) {
    for (let k = 0; k < cols; k++) {
      const a = p[i][k], b = p[i][k + 1], c = p[i + 1][k], e = p[i + 1][k + 1]
      d += `M${b}L${a}L${c}` + (r() > 0.5 ? `M${a}L${e}` : `M${b}L${c}`)
    }
  }
  return d
}
function specks(n: number, seed: number, at: (u: number, v: number) => [number, number], size = 4) {
  const r = rng(seed)
  let d = ''
  for (let i = 0; i < n; i++) {
    const [x, y] = at(r(), r())
    d += `M${Math.round(x)} ${Math.round(y)}h${size}v${size}h-${size}z`
  }
  return d
}
let star = ''
for (let i = 0; i < 6; i++) {
  for (let c = 0; c < 2; c++) {
    const x = 76 + i * 5 + c * 76, y = 240 + i * 62 + c * 3, w = 70, t = 62
    star += `M${x} ${y}l${w} ${t}M${x + w} ${y}l-${w} ${t}M${x + w / 2} ${y}v${t}M${x} ${y + t / 2}h${w}M${x} ${y}h${w}`
  }
}
const tanMesh = lattice(230, 300, 1090, 650, 27, 27, 11)
const tanFine = lattice(560, 400, 900, 520, 15, 15, 77)
const ballMesh = lattice(400, 500, 850, 920, 48, 44, 5)
const ballFine = lattice(330, 600, 860, 920, 17, 17, 8, 0.5)
const topMesh = lattice(200, 815, 930, 1020, 32, 12, 21, 0.5)
const lensMesh = lattice(700, 530, 890, 790, 29, 31, 31, 0.35)
const barrelMesh = lattice(620, 510, 800, 790, 16, 21, 41, 0.4)
const cornerMesh = lattice(60, 190, 260, 270, 13, 12, 3, 0.5) + lattice(90, 550, 290, 640, 14, 12, 17, 0.5)
const panelDots = specks(75, 99, (u, v) => { const x = 400 + u * 670; return [x, 232 - (x - 300) * 0.166 + v * 195] }, 4)
const clusterDots = specks(42, 12, (u, v) => [300 + u * 100, 300 + v * 140], 5)
const bandDots = specks(26, 66, (u, v) => { const x = 250 + u * 640; return [x, 198 - (x - 250) * 0.172 + (v - 0.5) * 12] }, 5)
let sideMesh = ''
for (let x = 500; x < 920; x += 49) {
  const y = 1003 - (x - 500) * 0.105
  sideMesh += `M${x - 25} ${y + 3}L${x} ${y + 72}L${x + 24} ${y - 2}M${x} ${y}V${y + 74}M${x - 25} ${y + 3}L${x - 36} ${y + 70}`
}
let leftSide = ''
for (let i = 0; i < 8; i++) {
  const x = 222 + i * 32
  leftSide += `M${x} ${905 + i * 14}V${990 + i * 12}L${x + 32} ${916 + i * 14}`
}
let neck = ''
for (let x = 450; x < 700; x += 26) neck += `M${x} 860V962l26-90`
</script>

<template>
  <div class="screen">
    <div class="frame">
      <div class="frame-shade"></div>
      <div class="share">
        <div class="share-on"><Ico n="phone" /><span v-fit="193">You are screen sharing</span><Ico n="shield" /></div>
        <div class="share-stop"><i></i><span v-fit="91">Stop Share</span></div>
      </div>

      <header class="title">
        <Ico n="app" /><i class="bar"></i><Ico n="save" /><Ico n="qat" class="qat" />
        <div class="context"><span v-fit="60">Context</span></div>
        <span class="doc">e]</span>
        <div class="win"><Ico n="min" /><Ico n="restore" /><Ico n="close" /></div>
      </header>

      <nav class="tabs">
        <div class="file"><span v-fit="25">File</span></div>
        <div v-for="t in tabs" :key="t.t" class="tab" :class="{ on: t.on }" :style="{ width: t.box + 'px' }"><span v-fit="t.w">{{ t.t }}</span></div>
        <div class="quick"><span v-fit="103">Quick Launch</span></div>
        <Ico n="chevUp" /><Ico n="checkSheet" /><Ico n="help" /><Ico n="downDark" />
      </nav>

      <section class="ribbon">
        <div class="group g1">
          <div class="cols">
            <div class="big off w86"><div class="pic"><Ico n="duplicate" /></div><span v-fit="73">Duplicate</span><Ico n="downLight" class="arr" /></div>
            <div class="stack c77"><div v-for="c in clipCmds" :key="c.t" class="cmd off"><i><Ico :n="c.n" /></i><span v-fit="c.w">{{ c.t }}</span></div></div>
            <div class="stack edit"><div v-for="c in editCmds" :key="c.t" class="cmd" :class="{ off: c.off }"><i><Ico :n="c.n" /></i><span v-fit="c.w">{{ c.t }}</span><Ico v-if="c.arrow" n="down" class="ar" /></div></div>
          </div>
          <div class="cap"><span v-fit="54">Outline</span></div>
        </div>
        <div class="group g2">
          <div class="cols">
            <div class="solver">
              <div class="combo"><span v-fit="103">My Computer</span><Ico n="down" /></div>
              <div class="line"><div class="check"><Ico n="tick" /></div><span v-fit="87">Distributed</span></div>
              <div class="line cores"><span v-fit="42">Cores</span><div class="num"><span>2</span></div></div>
            </div>
            <div class="big w60"><div class="pic"><Ico n="solve" /></div><span v-fit="40">Solve</span><Ico n="down" class="arr" /></div>
            <div class="big w88"><div class="pic"><Ico n="resource" /></div><span v-fit="70">Resource</span><span v-fit="78">Prediction</span></div>
          </div>
          <div class="cap"><span v-fit="40">Solve</span><Ico n="launcher" /></div>
        </div>
        <div class="group g3">
          <div class="cols">
            <div class="big w84"><div class="pic"><Ico n="analysis" /></div><span v-fit="61">Analysis</span><Ico n="down" class="arr" /></div>
            <div v-for="col in insertCols" :key="col.cls" class="stack" :class="col.cls">
              <div v-for="c in col.items" :key="c.t" class="cmd" :class="{ off: c.off }"><i><Ico :n="c.n" /></i><span v-fit="c.w">{{ c.t }}</span><Ico v-if="c.arrow" n="down" class="ar" /></div>
            </div>
          </div>
          <div class="cap"><span v-fit="41">Insert</span></div>
        </div>
        <div class="group g4"><div class="big w66"><div class="pic up"><Ico n="tools" /></div><span v-fit="40">Tools</span><Ico n="down" class="arr" /></div></div>
        <div class="group g4"><div class="big w66"><div class="pic up"><Ico n="layout" /></div><span v-fit="50">Layout</span><Ico n="down" class="arr" /></div></div>
      </section>

      <main class="work">
        <div class="left">
          <section class="outline">
            <div class="phead blue"><span v-fit="58">Outline</span><i class="dots"></i><Ico n="pDown" /><Ico n="pPin" /><Ico n="pMax" /><Ico n="pX" /></div>
            <div class="filter">
              <i class="grip"></i>
              <div class="combo name"><span v-fit="49">Name</span><Ico n="down" /></div>
              <div class="combo find"><span v-fit="116">Search Outline</span></div>
              <Ico n="chevDown" /><Ico n="downDark" class="low" />
            </div>
            <div class="tree">
              <div v-for="n in nodes" :key="n.t" class="node">
                <svg class="ico" :width="n.ind" height="24">
                  <path :d="n.lines" fill="none" stroke="#8a8a8a" stroke-width="1.200" stroke-dasharray="1.400 2" />
                  <g v-if="n.ex" :transform="`translate(${n.exAt} 6)`" v-html="icons[n.ex][2]"></g>
                  <g v-if="n.st" :transform="`translate(${n.ind - 42} ${n.st === 'sbolt' ? 7 : 11})`" v-html="icons[n.st][2]"></g>
                  <g :transform="`translate(${n.ind - 30} 1)`" v-html="icons[n.icon][2]"></g>
                </svg>
                <span v-fit="n.w" :class="{ bold: n.bold, sel: n.on }">{{ n.t }}</span>
              </div>
            </div>
          </section>
          <section class="details">
            <div class="phead"><span v-fit="135">Details of "Mesh"</span><i class="dots"></i><Ico n="pDown" /><Ico n="pPin" /><Ico n="pMax" /><Ico n="pX" /></div>
            <div class="pgrid">
              <div class="rows">
                <div v-for="p in props" :key="p.k" class="prow" :class="{ cat: p.ex }">
                  <div class="gut"><Ico v-if="p.ex" :n="p.ex" /></div>
                  <div class="pk"><i v-if="p.box"></i><span v-fit="p.kw">{{ p.k }}</span></div>
                  <div v-if="p.v" class="pv"><span v-fit="p.vw">{{ p.v }}</span></div>
                </div>
                <div class="prow"><div class="gut"></div><div class="pk"></div></div>
              </div>
              <div class="vbar"><i></i></div>
            </div>
            <div class="ptabs"><div class="on"><span v-fit="52">Details</span></div><div><span v-fit="114">Section Planes</span></div></div>
          </section>
        </div>

        <div class="right">
          <div class="gbar">
            <i class="grip"></i>
            <div v-for="(t, i) in tools" :key="i" class="tool" :style="{ width: t.room + 'px' }">
              <i v-if="t.sep" class="sep"></i>
              <div v-else :class="{ hot: t.on, wide: t.on && t.arrow, lbl: t.t }">
                <Ico v-if="t.n" :n="t.n" /><span v-if="t.t" v-fit="t.w">{{ t.t }}</span><Ico v-if="t.arrow" n="down" class="ar" />
              </div>
            </div>
          </div>

          <svg class="view" width="1364" height="532" viewBox="548 245 1364 532">
            <defs>
              <linearGradient id="sky" x1="0" y1="0" x2="0" y2="1">
                <stop offset="0" stop-color="#6a8bde" /><stop offset=".4" stop-color="#a5b9eb" /><stop offset=".62" stop-color="#c3d0f2" /><stop offset=".76" stop-color="#dde5f8" /><stop offset="1" stop-color="#fefeff" />
              </linearGradient>
              <radialGradient id="ball" cx=".6" cy=".2" r=".7"><stop offset="0" stop-color="#cfa680" /><stop offset=".5" stop-color="#8a6b4e" /><stop offset="1" stop-color="#4b3c2e" /></radialGradient>
              <linearGradient id="bside" x1="0" x2="1"><stop offset="0" stop-color="#2c362a" /><stop offset="1" stop-color="#647a60" /></linearGradient>
              <linearGradient id="neckg" x1="0" x2="1"><stop offset="0" stop-color="#3d4c3a" /><stop offset=".6" stop-color="#7f9a79" /><stop offset="1" stop-color="#94b08c" /></linearGradient>
              <radialGradient id="orb" cx=".4" cy=".35" r=".7"><stop offset="0" stop-color="#3fe6e6" /><stop offset="1" stop-color="#067f88" /></radialGradient>
              <clipPath id="cTan"><path d="M238 455H380L1065 335L1070 430Q1062 485 1015 505L860 565L620 632H290Q240 620 240 560z" /></clipPath>
              <clipPath id="cLeft"><path d="M68 240Q70 200 110 198L240 190L236 450L245 590L275 632H160Q100 622 92 550z" /></clipPath>
              <clipPath id="cBall"><path d="M345 630H515Q520 520 600 460Q800 440 858 630A258 258 0 0 1 600 905A265 265 0 0 1 340 640z" /></clipPath>
              <clipPath id="cTop"><path d="M222 885Q245 832 360 824L440 822L760 858Q860 885 908 935V962L500 1008L465 1018Q280 960 218 915z" /></clipPath>
              <clipPath id="cSide"><path d="M462 1010L910 958V1022L516 1075L465 1083z" /></clipPath>
              <clipPath id="cBSide"><path d="M222 900Q300 960 466 1010V1083Q300 1050 236 1000L212 972z" /></clipPath>
              <clipPath id="cNeck"><path d="M450 860H690V935Q600 975 450 925z" /></clipPath>
              <clipPath id="cLens"><ellipse cx="790" cy="656" rx="68" ry="100" /></clipPath>
              <clipPath id="cBarrel"><path d="M680 540Q720 520 800 541V771H700Q630 740 630 650Q635 570 680 540z" /></clipPath>
              <mask id="mRim" maskUnits="userSpaceOnUse" x="300" y="600" width="600" height="340"><path d="M365 620Q360 860 600 880Q760 880 830 740" fill="none" stroke="#fff" stroke-width="85" /></mask>
            </defs>
            <rect x="548" y="245" width="1364" height="532" fill="url(#sky)" />

            <g transform="translate(1040 330) scale(.33333)">
              <path d="M222 885Q245 832 360 824L440 822L760 858Q860 885 908 935V962L500 1008L465 1018Q280 960 218 915z" fill="#85a17f" stroke="#000" stroke-width="5" />
              <path :d="topMesh" clip-path="url(#cTop)" fill="none" stroke="#000" stroke-width="3.600" />
              <path d="M224 880Q210 915 250 935Q360 985 500 1000L908 948" fill="none" stroke="#000" stroke-width="13" />
              <path d="M222 900Q300 960 466 1010V1083Q300 1050 236 1000L212 972z" fill="url(#bside)" stroke="#000" stroke-width="4" />
              <path :d="leftSide" clip-path="url(#cBSide)" fill="none" stroke="#000" stroke-width="3" />
              <path d="M462 1010L910 958V1022L516 1075L465 1083z" fill="#93b08b" stroke="#000" stroke-width="4" />
              <path :d="sideMesh" clip-path="url(#cSide)" fill="none" stroke="#000" stroke-width="3.200" />
              <path d="M450 860H690V935Q600 975 450 925z" fill="url(#neckg)" />
              <path :d="neck" clip-path="url(#cNeck)" fill="none" stroke="#000" stroke-width="3.200" />

              <path d="M68 240Q70 205 110 198L240 175L850 68Q940 55 1022 66L1050 92L1066 340L1070 430Q1060 488 1015 505L860 567L620 634H160Q100 622 90 550z" fill="#f5c000" />
              <path d="M240 470L380 462L1062 345L1066 430Q1058 482 1012 500L860 560L620 626H290Q245 615 240 560z" fill="#d2a67e" />
              <path :d="tanMesh" clip-path="url(#cTan)" fill="none" stroke="#f5c000" stroke-width="4" />
              <path :d="tanFine" clip-path="url(#cTan)" fill="none" stroke="#f5c000" stroke-width="2.600" />
              <circle cx="438" cy="532" r="30" fill="#f5c000" /><circle cx="880" cy="450" r="22" fill="#f5c000" />
              <path d="M880 428q10 20 4 42" fill="none" stroke="#f3d8a0" stroke-width="6" />
              <path d="M76 255H138L160 545L150 580H110Q96 560 94 520z M150 255H224L238 520L262 612L180 600L164 550z" fill="#4c4030" />
              <path :d="star" clip-path="url(#cLeft)" fill="none" stroke="#f5c000" stroke-width="4.500" />
              <path :d="cornerMesh" clip-path="url(#cLeft)" fill="none" stroke="#6a5428" stroke-width="2.600" stroke-dasharray="9 7" />
              <path d="M146 220L150 380L166 600M232 215L232 450L242 580" fill="none" stroke="#f5c000" stroke-width="9" />
              <path :d="bandDots" fill="#c09a58" />

              <path d="M345 630H515Q520 520 600 460Q800 440 858 630A258 258 0 0 1 600 905A265 265 0 0 1 340 640z" fill="url(#ball)" />
              <path d="M610 470Q760 430 850 570V620L700 520L630 630L600 560z" fill="#d2a67e" />
              <g clip-path="url(#cBall)" fill="none" stroke="#f5c000">
                <path :d="ballMesh" stroke-width="4.500" />
                <path :d="tanFine" stroke-width="3" />
                <path :d="ballFine" stroke-width="4" mask="url(#mRim)" />
                <path d="M348 630Q340 885 600 899Q770 900 850 740" stroke-width="18" />
                <path d="M408 630Q412 780 490 830" stroke-width="9" />
                <path d="M640 905Q770 880 845 740" stroke-width="40" />
              </g>
              <path d="M700 515Q620 560 622 655Q625 760 690 800Q760 815 815 770" fill="none" stroke="#f5c000" stroke-width="18" />
              <path d="M640 500Q720 430 830 500" fill="none" stroke="#f5c000" stroke-width="16" />
              <path d="M690 790Q750 812 812 762" fill="none" stroke="#c9a98a" stroke-width="6" stroke-dasharray="6 9" />
              <path d="M690 525Q710 508 740 525L745 545L700 555z" fill="#4b3d2e" />

              <path d="M680 540Q720 520 800 541V771H700Q630 740 630 650Q635 570 680 540z" fill="#44605c" />
              <path d="M672 540L690 535L702 555L680 560zM655 750L705 755L700 772L676 772z" fill="#a9cfc9" />
              <path d="M720 545H800V771H725Q670 740 670 650Q675 575 720 545z" fill="#55503e" />
              <path :d="barrelMesh" clip-path="url(#cBarrel)" fill="none" stroke="#000" stroke-width="3.400" />
              <path d="M682 550Q655 580 655 655Q658 730 690 765" fill="none" stroke="#8fb9b4" stroke-width="4" stroke-dasharray="7 9" />
              <ellipse cx="795" cy="656" rx="83" ry="116" fill="#000" />
              <ellipse cx="793" cy="656" rx="75" ry="108" fill="none" stroke="#b5af8b" stroke-width="8" stroke-dasharray="6 5" />
              <ellipse cx="790" cy="656" rx="68" ry="100" fill="#b3afbb" />
              <path :d="lensMesh" clip-path="url(#cLens)" fill="none" stroke="#000" stroke-width="3.600" />

              <path d="M258 222L1000 88Q1080 88 1092 100Q1108 130 1110 200L1118 318L1102 330L380 460L250 452L238 255z" fill="#000" />
              <path d="M262 218L900 106" stroke="#c79f55" stroke-width="5" stroke-dasharray="7 8" />
              <path :d="panelDots" fill="#b3954a" />
              <path :d="clusterDots" fill="#cfa468" />
              <path d="M244 240H330" stroke="#f5c000" stroke-width="20" stroke-dasharray="24 3" />
              <path d="M300 240Q360 246 412 300" fill="none" stroke="#f5c000" stroke-width="15" />
              <path d="M310 248Q352 254 388 292" fill="none" stroke="#a9a49b" stroke-width="6" />
              <path d="M250 460H340Q385 445 420 392" fill="none" stroke="#f5c000" stroke-width="13" />
              <path d="M330 462Q380 448 412 402" fill="none" stroke="#d2a067" stroke-width="7" />
              <path d="M1085 97Q1112 120 1090 168" fill="none" stroke="#f5c000" stroke-width="7" />
              <path d="M1096 265L1124 305L1104 328" fill="none" stroke="#f5c000" stroke-width="9" /><path d="M1108 268L1130 302" stroke="#8fae6a" stroke-width="6" />
            </g>

            <g class="ann">
              <text x="569" y="283" font-weight="700" textLength="45">Mesh</text>
              <text x="569" y="306" textLength="133">17-04-2022 22:35</text>
              <text x="569" y="378" textLength="113">Meshing State</text>
              <text x="601" y="405" textLength="118">Obsolete Mesh</text>
              <text x="601" y="432" textLength="94">Failed Mesh</text>
              <rect x="570.500" y="389" width="23" height="23" fill="#ff0cc4" stroke="#111" stroke-width="1.300" />
              <rect x="570.500" y="416" width="23" height="23" fill="#f5c000" stroke="#111" stroke-width="1.300" />
              <text x="992" y="717" textLength="32">0.00</text>
              <text x="1212" y="717" textLength="41">50.00</text>
              <text x="1435" y="717" textLength="97">100.00 (mm)</text>
              <text x="1100" y="748" textLength="41">25.00</text>
              <text x="1327" y="748" textLength="40">75.00</text>
              <rect x="1008.500" y="722" width="450.500" height="9.500" fill="#f6f8fe" stroke="#111" stroke-width="1.300" />
              <path d="M1008 722h113.500v10H1008zM1233 722h113.500v10H1233z" fill="#000" />
            </g>

            <g fill="#fff" font-family="'Open Sans',sans-serif">
              <path d="M1759 293L1772 260H1781L1768.500 293zM1778.500 265L1783.500 261L1796 293H1785.500z" />
              <text x="1796" y="292.700" font-size="44" font-weight="700" textLength="92" lengthAdjust="spacingAndGlyphs">nsys</text>
              <text x="1802" y="326.700" font-size="24" textLength="49" font-family="Lato,sans-serif" fill="#f1f4fd">2021</text>
              <text x="1857" y="326.700" font-size="24" font-weight="700" textLength="31" font-family="Lato,sans-serif">R2</text>
              <rect x="1759" y="340" width="130" height="2" />
              <text x="1767" y="373.500" font-size="24" font-weight="700" textLength="113" font-family="Lato,sans-serif">STUDENT</text>
            </g>

            <g class="triad">
              <path d="M1811 681L1815 628" stroke="#065c0c" stroke-width="4" /><path d="M1817 611L1822.500 629H1809.500z" fill="#078510" />
              <path d="M1811 681L1778 666" stroke="#050560" stroke-width="4" /><path d="M1766 660L1776 658.500L1783 662L1780 671L1773 670z" fill="#0a0aa8" />
              <path d="M1811 681L1768 686" stroke="#b00808" stroke-width="4" /><path d="M1753 689L1768 679L1770 693.500z" fill="#d01010" />
              <text x="1818" y="601" fill="#18b030">Y</text><text x="1742.500" y="690" fill="#f02020">X</text><text x="1758" y="658.500" fill="#3434f0">Z</text>
              <circle cx="1766" cy="642" r="7" fill="url(#orb)" />
            </g>
          </svg>

          <section class="messages">
            <div class="phead msg"><span v-fit="76">Messages</span><i class="dots"></i><Ico n="pDown" /><Ico n="pPin" /><Ico n="pX" /></div>
            <div class="mbody">
              <div class="mtable">
                <div class="mrow mh"><div></div><div><span v-fit="30">Text</span></div><div><span v-fit="88">Association</span></div><div><span v-fit="83">Timestamp</span></div></div>
                <div v-for="(m, i) in messages" :key="i" class="mrow">
                  <div><span v-fit="38">Error</span></div><div><span v-fit="686">{{ m.a }}</span></div><div><span v-fit="447">{{ m.b }}</span></div><div><span v-fit="113">Sunday, April 1</span></div>
                </div>
                <div class="mrow"><div></div><div></div><div></div><div></div></div>
              </div>
              <div class="mv"><i></i></div>
            </div>
            <div class="mhbar"><i></i></div>
          </section>
        </div>
      </main>

      <footer class="status">
        <Ico n="warn" /><span v-fit="99">11 Messages</span><span v-fit="100">No Selection</span><Ico n="up" />
        <span v-fit="240">Metric (mm, kg, N, s, mV, mA)</span><span v-fit="63">Degrees</span><span v-fit="40">rad/s</span><span v-fit="48">Kelvin</span>
      </footer>
    </div>

    <div class="taskbar">
      <div class="widgets"><Ico n="widgets" /></div>
      <div v-for="p in pinned" :key="p.n" class="pin" :class="[p.n, { on: p.on, run: p.run }]">
        <div class="face"><Ico :n="p.n" /><b v-if="p.badge">{{ p.badge }}</b></div>
        <i v-if="p.run || p.on"></i>
      </div>
      <div class="tray">
        <div v-for="t in tray" :key="t[0]" class="ti" :style="{ width: t[1] + 'px' }"><Ico :n="t[0]" /></div>
        <div class="lang"><span v-fit="35">ENG</span><span v-fit="17">IN</span></div>
        <div class="sys"><Ico n="tWifi" /><Ico n="tVol" /><Ico n="tBat" /></div>
        <div class="clock"><span v-fit="43">22:35</span><span v-fit="91">17-04-2022</span></div>
        <div class="note">1</div>
      </div>
    </div>
  </div>
</template>

<style>
body { margin: 0; overflow: hidden; }
</style>

<style scoped>
* { box-sizing: border-box; }
.screen { width: 1920px; height: 1080px; overflow: hidden; font: 17px/20px 'Open Sans', 'Noto Sans', sans-serif; color: #222; white-space: nowrap; }
.ico { display: block; flex: none; }
.frame { position: relative; width: 1920px; height: 1008px; padding: 8px 8px 0; background: #8cbe27; }
.frame-shade { position: absolute; left: 363px; top: 0; width: 1170px; height: 3px; background: #79a322; border-radius: 0 0 5px 5px; }
.share { position: absolute; z-index: 5; left: 703px; top: 0; display: flex; width: 488px; height: 33px; border-radius: 0 0 8px 8px; overflow: hidden; box-shadow: 0 1px 5px #0006; }
.share-on { display: flex; align-items: center; width: 351px; background: #24da5d; font-weight: 600; color: #1c3540; }
.share-on .ico:first-child { margin-left: 11px; }
.share-on span { width: 246px; padding-left: 48px; }
.share-on .ico:last-child { margin: 3px 0 0 48px; }
.share-stop { display: flex; align-items: center; flex: 1; padding: 0 0 2px 10px; background: #e02828; color: #fff; font-weight: 600; }
.share-stop i { width: 13px; height: 13px; margin-right: 8px; background: #fff; border-radius: 2px; }

.title { display: flex; align-items: flex-start; height: 31px; padding-left: 4px; background: #eeeef1; }
.title .bar { width: 1px; height: 26px; margin: 0 9px 0 11px; background: #ccced8; }
.title .qat { margin: 2px 0 0 9px; }
.context { width: 82px; height: 31px; margin-left: 86px; padding: 4px 0 0 10px; background: #d5dff2; color: #456fba; }
.doc { margin: 4px 0 0 916px; color: #6c7090; }
.win { display: flex; align-items: center; margin-left: auto; height: 26px; padding-right: 10px; gap: 35px; }
.win .ico:first-child { margin: 6px 1px 0 0; }
.win .ico:nth-child(2) { margin-top: 3px; }
.win .ico:last-child { margin-top: -2px; }

.tabs { display: flex; height: 36px; background: #eeeef1; border-bottom: 2px solid #d5d5da; }
.file { width: 76px; height: 34px; padding: 8px 0 0 22px; background: #0071c6; color: #fff; }
.tab { height: 34px; padding-top: 9px; text-align: center; color: #333; }
.tab.on { height: 36px; margin-left: 12px; background: #fafafa; border: 2px solid #d5d5da; border-bottom: 0; padding: 7px 1px 0 0; }
.quick { width: 241px; height: 31px; margin: 2px 5px 0 auto; padding: 4px 0 0 5px; border: 2px solid #d6d6e2; background: #fff; color: #a5a5a5; }
.tabs > .ico { margin-top: 10px; }
.tabs > .ico:nth-of-type(2) { margin: 6px 12px 0 12px; }
.tabs > .ico:nth-of-type(3) { margin-top: 6px; }
.tabs > .ico:last-child { margin: 13px -3px 0 1px; }

.ribbon { display: flex; height: 130px; background: #fafafa; border-bottom: 2px solid #d5d5da; }
.group { display: flex; flex-direction: column; height: 109px; margin-top: 9px; border-right: 1px solid #c9c9cd; }
.group > .cols, .group > .big { margin-top: -2px; }
.g1 { width: 256px; }
.g2 { width: 345px; }
.g3 { width: 527px; }
.g4 { width: 66px; }
.cols { display: flex; height: 95px; }
.stack { display: flex; flex-direction: column; margin-top: -1px; }
.c77 { width: 77px; margin-left: 5px; }
.edit .ico { margin-left: -1px; }
.c179 { width: 179px; }
.c122 { width: 122px; }
.cmd { display: flex; align-items: center; height: 31.5px; }
.cmd i { display: flex; justify-content: center; width: 22px; margin-right: 3px; }
.off { color: #a2a2a2; }
.cmd .ar { margin: -4px 0 0 3px; }
.big { display: flex; flex-direction: column; align-items: center; line-height: 17px; }
.w86 { width: 87px; margin-right: -1px; } .w60 { width: 62px; } .w88 { width: 88px; } .w84 { width: 84px; } .w66 { width: 66px; margin-left: 1px; }
.pic { display: flex; align-items: center; height: 52px; margin-bottom: 5px; }
.pic.up { padding-bottom: 9px; }
.w84 .pic { margin-left: 1px; }
.arr { margin-top: 11px; }
.cap { display: flex; justify-content: center; height: 16px; line-height: 16px; }
.g3 .cap { padding-left: 4px; }
.g2 .cap span { margin-left: 155px; margin-right: auto; }
.g2 .cap .ico { margin: 3px 4px 0 0; }
.solver { width: 180px; margin-left: 9px; }
.combo { display: flex; align-items: center; justify-content: space-between; width: 180px; height: 31px; padding: 0 6px 2px 4px; border: 2px solid #d6d6e2; background: #fff; }
.line { display: flex; align-items: center; height: 32px; padding-left: 5px; }
.cores { height: 31px; padding-left: 4px; }
.check { display: flex; align-items: center; justify-content: center; width: 19px; height: 19px; margin-right: 9px; border: 1.5px solid #cacad8; background: #fff; }
.num { width: 68px; height: 31px; margin-left: 6px; padding: 4px 4px; border: 2px solid #d6d6e2; background: #fff; }

.work { display: flex; height: 773px; background: #eeeef1; }
.left { width: 533px; }
.right { width: 1365px; margin-left: 6px; }
.phead { display: flex; align-items: center; height: 30px; padding: 0 11px 0 0; color: #444; }
.phead .dots { flex: 1; height: 9px; margin: 0 6px 0 7px; background: radial-gradient(circle at 1.5px 1.5px, #a9a9af 1px, transparent 1.3px) 0 0 / 6px 6px, radial-gradient(circle at 4.5px 4.5px, #a9a9af 1px, transparent 1.3px) 0 0 / 6px 6px; }
.phead .ico { color: #222; }
.phead .ico + .ico { margin-left: 11px; }
.phead:not(.msg) .ico:last-child { margin-left: 10px; }
.phead.blue { background: #007acc; color: #fff; }
.phead.blue .ico { color: #fff; }
.phead.blue .dots { background: radial-gradient(circle at 1.5px 1.5px, #62b0e4 1px, transparent 1.3px) 0 0 / 6px 6px, radial-gradient(circle at 4.5px 4.5px, #62b0e4 1px, transparent 1.3px) 0 0 / 6px 6px; }
.outline { height: 460px; }
.filter { display: flex; align-items: center; height: 41px; }
.grip { width: 9px; height: 27px; margin: 0 10px 0 6px; background: radial-gradient(circle at 1.5px 1.5px, #a5a5aa 1px, transparent 1.3px) 0 0 / 6px 6px, radial-gradient(circle at 4.5px 4.5px, #a5a5aa 1px, transparent 1.3px) 0 0 / 6px 6px; }
.combo.name { width: 150px; height: 34px; padding: 1px 6px 0 3px; }
.combo.find { width: 136px; height: 34px; color: #a8a8a8; padding: 1px 0 0 4px; }
.filter > .ico { margin-left: 7px; }
.filter .low { margin: 14px 0 0 10px; }
.tree { height: 389px; background: #fff; color: #222; }
.node { display: flex; align-items: center; height: 24px; }
.node span { line-height: 22px; }
.node .bold { font: 700 16.500px/22px 'Noto Sans', 'Open Sans', sans-serif; color: #111; }
.node .sel { height: 24px; margin-left: -2px; padding: 0 2px; line-height: 24px; background: #0078d7; color: #fff; outline: 1px dotted #f0a050; outline-offset: -1px; }
.details { margin-top: 5px; }
.details .phead { height: 31px; padding-right: 10px; padding-bottom: 1px; border-top: 1px solid #ccced8; border-right: 1px solid #ccced8; }
.pgrid { display: flex; height: 248px; background: #fff; }
.rows { width: 508px; height: 248px; overflow: hidden; border-right: 1.5px solid #a0a0a0; }
.prow { display: flex; height: 27px; }
.gut { display: flex; align-items: center; width: 12px; }
.gut .ico { margin-left: -5px; }
.pk { display: flex; align-items: center; flex: none; width: 152px; padding: 0 0 2px 4px; border: solid #a0a0a0; border-width: 1.5px 0 0 1.5px; }
.cat .pk, .prow:last-child .pk { flex: 1; font-weight: 700; color: #111; }
.pk i { width: 18px; height: 19px; margin-right: 6px; border: 1.5px solid #b8b8b8; }
.pv { display: flex; align-items: center; flex: 1; padding: 0 0 2px 4px; border: solid #a0a0a0; border-width: 1.5px 0 0 1.5px; }
.vbar { flex: 1; padding: 25px 0 0 12px; background: #f0f0f1; }
.vbar i { display: block; width: 3px; height: 162px; background: #888; border-radius: 2px; }
.ptabs { display: flex; height: 28px; color: #555; border-top: 1px solid #ccced8; }
.ptabs div { padding: 3px 0 0 9px; }
.ptabs .on { width: 62px; margin-top: -1px; padding: 4px 0 0 1px; background: #f6f6f8; color: #0e7fd0; border-right: 1px solid #ccced8; border-bottom: 1px solid #ccced8; }

.gbar { display: flex; align-items: center; height: 40px; }
.gbar .grip { margin: 0 16px 0 14px; flex: none; }
.tool { flex: none; height: 34px; }
.tool > div { display: flex; align-items: center; height: 34px; }
.tool .sep { display: block; width: 1px; height: 30px; margin-top: 2px; background: #cfcfda; }
.tool .hot { justify-content: center; width: 33px; border: 2px solid #55a5ee; background: #f2f6fc; }
.tool .wide { width: 50px; justify-content: space-between; padding: 0 2px 0 4px; }
.tool .ar { margin: -2px 0 0 2px; }
.view { display: block; margin-left: 1px; }
.ann text { font: 17px 'Noto Sans', 'Open Sans', sans-serif; fill: #000; }
.ann text[font-weight] { font-weight: 700; }
.triad text { font: 17px 'Open Sans', sans-serif; }
.messages { margin: 6px 0 0 1px; }
.phead.msg { height: 30px; padding: 0 4px 2px 6px; border-top: 1px solid #ccced8; border-left: 1px solid #ccced8; }
.mbody { display: flex; height: 140px; background: #f0f0f1; }
.mtable { width: 1347px; height: 140px; padding: 0 0 0 1px; overflow: hidden; background: #fff; color: #1a1a1a; }
.mrow { display: flex; height: 22.5px; line-height: 21px; }
.mrow > div { height: 22.5px; padding-left: 5px; overflow: hidden; border: solid #b9b9b9; border-width: 0 1.5px 1.5px 0; }
.mrow > div:nth-child(1) { width: 73px; padding-left: 2px; background: #f0f0f0; border-color: #6f6f6f; }
.mrow > div:nth-child(2) { width: 698px; }
.mrow > div:nth-child(3) { width: 457px; padding-left: 4px; }
.mrow > div:nth-child(4) { width: 118px; padding-left: 4px; border-right: 0; }
.mrow > div span { display: block; height: 20px; overflow: hidden; line-height: 22px; }
.mrow.mh > div { background: #f0f0f0; border-color: #6f6f6f; }
.mrow.mh span { height: 21px; }
.mv { padding: 25px 0 0 12px; }
.mv i { display: block; width: 3px; height: 42px; background: #888; }
.mhbar { padding: 12px 0 0 25px; }
.mhbar i { display: block; width: 1110px; height: 3px; background: #8a8a8a; border-radius: 2px; }

.status { display: flex; align-items: center; height: 30px; padding: 2px 4px 0 1146px; background: #007acc; color: #e9f3fb; }
.status .ico { margin-right: 3px; }
.status span + span { margin-left: 26px; }
.status .ico:nth-of-type(2) { margin: -4px 9px 0 33px; }
.status span:nth-of-type(4), .status span:nth-of-type(5), .status span:nth-of-type(6) { margin-left: 19px; }

.taskbar { display: flex; height: 72px; background: radial-gradient(ellipse 420px 90px at 0 100%, #d4f6da, transparent), radial-gradient(ellipse 420px 100px at 100% 80%, #d6f7d2, transparent), linear-gradient(90deg, #dff1f0, #dfecf7 18%, #d5e1f7 38%, #d5daf1 60%, #dcdcee 74%, #dfecf8 80%, #e0f2ee); border-top: 1px solid #c7cfe0; }
.widgets { width: 265px; padding: 20px 0 0 27px; }
.pin { display: flex; flex-direction: column; align-items: center; width: 66.100px; }
.face { position: relative; display: flex; align-items: center; justify-content: center; width: 56px; height: 57px; margin-top: 8px; }
.pin.chromeA .face, .pin.chromeB .face { padding: 0 0 8px 11px; }
.pin.monitor .face { padding-bottom: 2px; }
.pin.monitor .ico, .pin.edge .ico, .pin.whatsapp .ico { margin-left: 1px; }
.face b { position: absolute; left: 30px; top: 3px; width: 24px; height: 24px; border-radius: 50%; background: #f50f0f; color: #fff; font: 19px/24px 'Open Sans', sans-serif; text-align: center; }
.pin > i { width: 9px; height: 5px; margin-top: -5px; border-radius: 3px; background: #7b8088; }
.pin.run > i { margin-left: 2px; }
.pin.on .face { background: #edf0fa; border-radius: 6px; box-shadow: 0 1px 1px #0002; }
.pin.on > i { width: 24px; height: 5px; background: #0a78d4; }
.tray { display: flex; align-items: center; margin-left: 18px; }
.ti { display: flex; justify-content: center; flex: none; }
.lang { display: flex; flex-direction: column; align-items: center; width: 58px; line-height: 23px; padding-bottom: 2px; }
.sys { display: flex; align-items: center; gap: 13px; width: 112px; padding-left: 17px; }
.clock { display: flex; flex-direction: column; align-items: flex-end; width: 113px; line-height: 23px; padding-bottom: 3px; }
.note { width: 24px; height: 24px; margin-left: 11px; border-radius: 50%; background: #0a78d4; color: #fff; font-size: 14px; line-height: 24px; text-align: center; }
</style>
